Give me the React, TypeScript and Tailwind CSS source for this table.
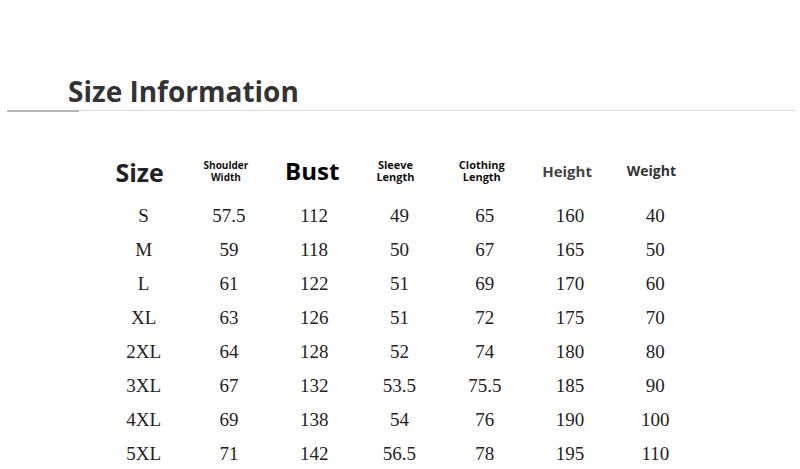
import React from "react";

const rows: string[][] = [
  ["S", "57.5", "112", "49", "65", "160", "40"],
  ["M", "59", "118", "50", "67", "165", "50"],
  ["L", "61", "122", "51", "69", "170", "60"],
  ["XL", "63", "126", "51", "72", "175", "70"],
  ["2XL", "64", "128", "52", "74", "180", "80"],
  ["3XL", "67", "132", "53.5", "75.5", "185", "90"],
  ["4XL", "69", "138", "54", "76", "190", "100"],
  ["5XL", "71", "142", "56.5", "78", "195", "110"],
];

const sans = { fontFamily: '"Open Sans", "Noto Sans", sans-serif' };
const serif = { fontFamily: '"Liberation Serif", "DejaVu Serif", serif' };

function Two({ a, b, cls }: { a: string; b: string; cls: string }) {
  return (
    <div className={"flex flex-col items-center font-bold text-[#111111] " + cls}>
      <span className="block h-[12px] leading-[12px]">{a}</span>
      <span className="block h-[12px] leading-[12px]">{b}</span>
    </div>
  );
}

export default function App() {
  return (
    <div className="w-[800px] h-[469px] bg-white overflow-hidden">
      <div className="h-[70px]" />
      <div className="pl-[68px] h-[40px] flex items-end">
        <h1 className="text-[28px] leading-[40px] font-bold text-[#333333] -mb-[1px]" style={sans}>
          Size Information
        </h1>
      </div>
      <div className="ml-[7px] w-[788px] h-[2px] flex">
        <div className="w-[72px] h-[2px] bg-[#b5b5b5]" />
        <div className="flex-1 h-[1px] bg-[#dddddd]" />
      </div>
      <div className="ml-[101px] w-[597px] mt-[40px]">
        <div className="grid grid-cols-7 h-[38px] items-center" style={sans}>
          <div className="text-center pr-[8px] text-[25px] font-bold text-[#222222] leading-none pt-[2px]">Size</div>
          <Two a="Shoulder" b="Width" cls="pr-[6px] text-[10px]" />
          <div className="text-center pr-[4px] text-[24px] font-bold text-[#000000] leading-none">Bust</div>
          <Two a="Sleeve" b="Length" cls="pr-[8px] text-[11px]" />
          <Two a="Clothing" b="Length" cls="pr-[6px] text-[11px]" />
          <div className="text-center pr-[6px] text-[15px] font-bold text-[#444444] leading-none">Height</div>
          <div className="text-center pr-[8px] text-[14px] font-bold text-[#333333] leading-none">Weight</div>
        </div>
        <div className="mt-[8px]" style={serif}>
          {rows.map((r, i) => (
            <div key={i} className="grid grid-cols-7 h-[34px] items-center">
              {r.map((c, j) => (
                <div key={j} className="text-center text-[19px] text-[#222222] leading-none">
                  {c}
                </div>
              ))}
            </div>
          ))}
        </div>
      </div>
    </div>
  );
}
